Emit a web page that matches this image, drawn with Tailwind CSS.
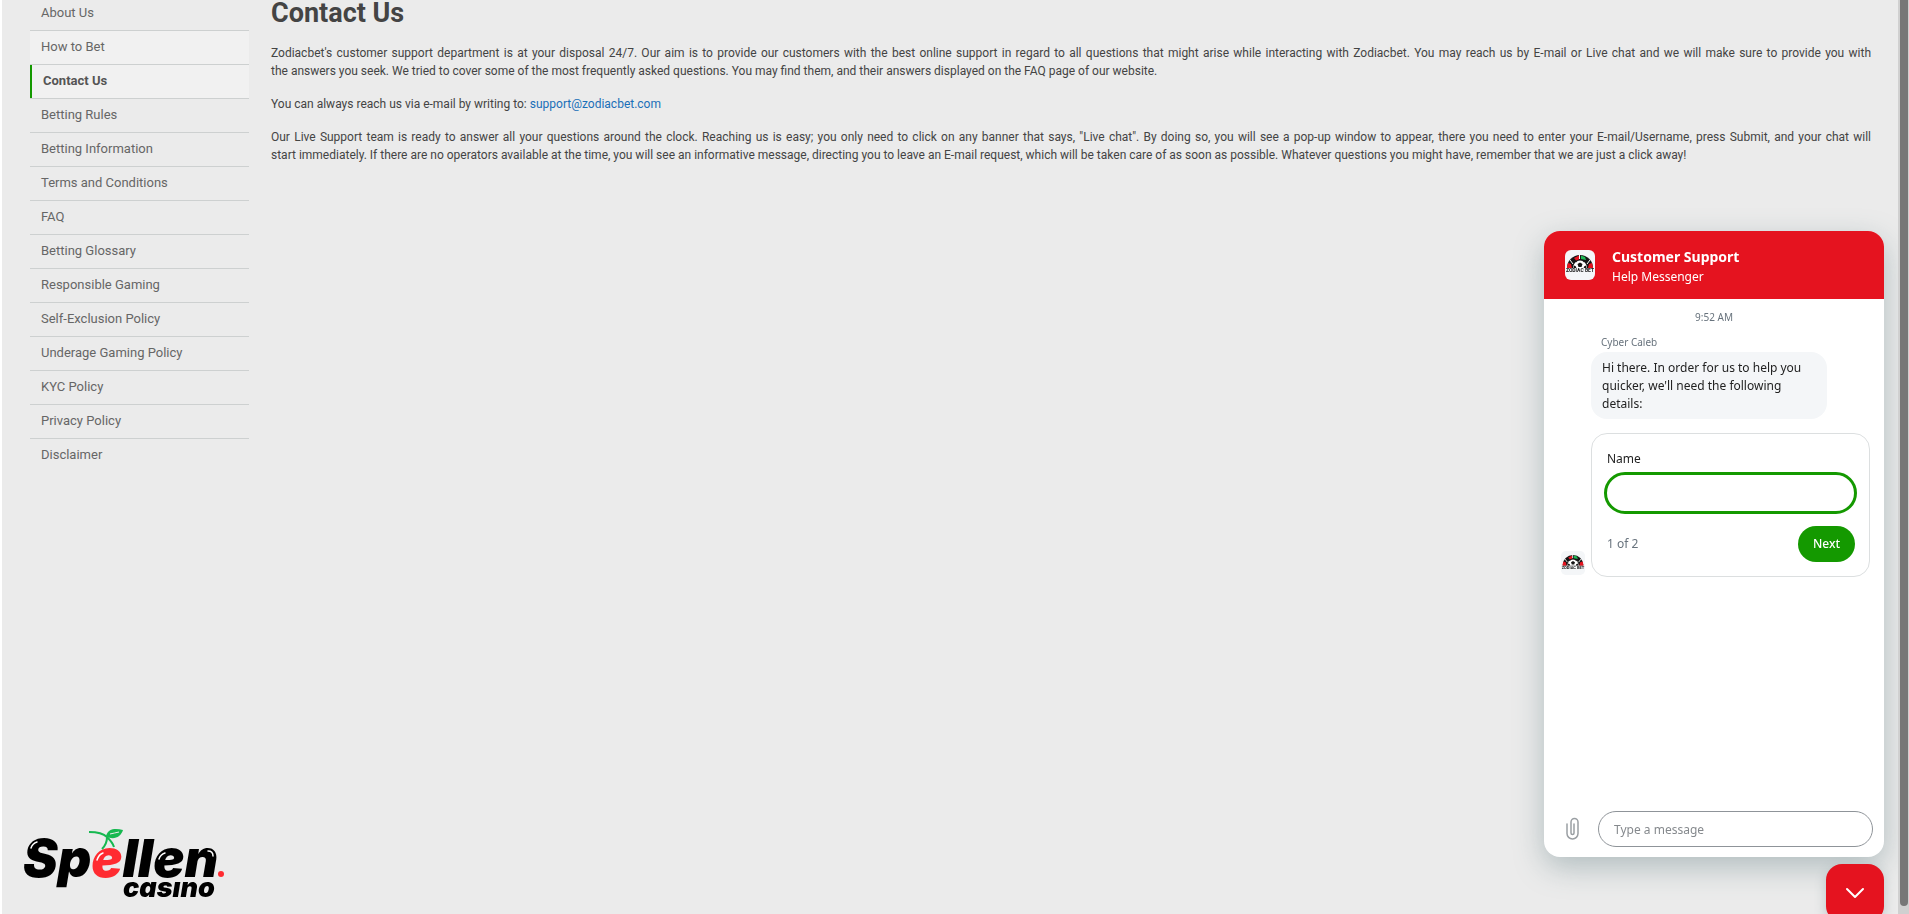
<!DOCTYPE html>
<html lang="en">
<head>
  <meta charset="UTF-8" />
  <meta name="viewport" content="width=device-width, initial-scale=1">
  <title>Contact Us - Zodiacbet</title>
  <script src="https://cdn.jsdelivr.net/npm/@tailwindcss/browser@4"></script>
</head>
<body class="bg-[#ebebeb] font-[Roboto,sans-serif] text-[13px] leading-[18px] text-[#444] min-h-screen overflow-hidden border-l-2 border-white">

  <!-- Shared club badge -->
  <svg class="hidden" xmlns="http://www.w3.org/2000/svg">
    <symbol id="badge" viewBox="0 0 30 30">
      <rect width="30" height="30" rx="6" fill="#f4f6f8" />
      <path d="M2 18a13 13 0 0 1 26 0z" fill="#151515" />
      <path d="M9 8l5-2.500v4l-3 1zM2 17l1-4 3 1 1 4H2zM28 17l-1-4-3 1-1 4h5z" fill="#e5131f" />
      <path d="M16 5.500l4 1.500 1 3-5-1z" fill="#1db954" />
      <path d="M5 10l3 4M25 10l-3 4M14.500 5v4" stroke="#fff" stroke-width="1" />
      <path d="M8 18a7 7.500 0 0 1 14 0z" fill="#fff" />
      <path d="M12.500 14l2.500-1.500 2.500 1.500-1 3h-3zM9 15.500l2 1 .3 1.500H8.500zM21 15.500l-2 1-.3 1.500h2.800zM12.500 11l-1.500 1.500.3-1.500zM17.500 11l1.500 1.500-.3-1.500z" fill="#151515" />
      <text x="15" y="22" text-anchor="middle" font-family="Roboto, sans-serif" font-size="5" font-weight="700" fill="#151515">ZODIAC BET</text>
    </symbol>
  </svg>

  <div class="flex gap-[22px] pl-7 pr-[38px]">
    <!-- Sidebar -->
    <nav class="-mt-[3px] w-[219px] shrink-0">
      <ul class="text-[#666] divide-y divide-[#cdd0d0]">
        <li class="h-[34px]"><a href="#" class="flex h-full items-center pb-[2px] pl-[11px]">About Us</a></li>
        <li class="h-[34px] bg-[#f1f1f1]"><a href="#" class="flex h-full items-center pb-[2px] pl-[11px]">How to Bet</a></li>
        <li class="h-[34px] bg-[#f1f1f1]"><a href="#" class="flex h-full items-center border-l-2 border-[#149900] pb-[2px] pl-[11px] font-bold text-[#555]">Contact Us</a></li>
        <li class="h-[34px]"><a href="#" class="flex h-full items-center pb-[2px] pl-[11px]">Betting Rules</a></li>
        <li class="h-[34px]"><a href="#" class="flex h-full items-center pb-[2px] pl-[11px]">Betting Information</a></li>
        <li class="h-[34px]"><a href="#" class="flex h-full items-center pb-[2px] pl-[11px]">Terms and Conditions</a></li>
        <li class="h-[34px]"><a href="#" class="flex h-full items-center pb-[2px] pl-[11px]">FAQ</a></li>
        <li class="h-[34px]"><a href="#" class="flex h-full items-center pb-[2px] pl-[11px]">Betting Glossary</a></li>
        <li class="h-[34px]"><a href="#" class="flex h-full items-center pb-[2px] pl-[11px]">Responsible Gaming</a></li>
        <li class="h-[34px]"><a href="#" class="flex h-full items-center pb-[2px] pl-[11px]">Self-Exclusion Policy</a></li>
        <li class="h-[34px]"><a href="#" class="flex h-full items-center pb-[2px] pl-[11px]">Underage Gaming Policy</a></li>
        <li class="h-[34px]"><a href="#" class="flex h-full items-center pb-[2px] pl-[11px]">KYC Policy</a></li>
        <li class="h-[34px]"><a href="#" class="flex h-full items-center pb-[2px] pl-[11px]">Privacy Policy</a></li>
        <li class="h-[34px]"><a href="#" class="flex h-full items-center pb-[2px] pl-[11px]">Disclaimer</a></li>
      </ul>
    </nav>

    <!-- Content -->
    <main class="flex-1 text-justify text-[12px] leading-[18px]">
      <h1 class="text-[27px] leading-[26px] font-bold mb-[18px]">Contact Us</h1>
      <p class="mb-[15px]"><span class="block [text-align-last:justify]">Zodiacbet's customer support department is at your disposal 24/7. Our aim is to provide our customers with the best online support in regard to all questions that might arise while interacting with Zodiacbet. You may reach us by E-mail or Live chat and we will make sure to provide you with</span> the answers you seek. We tried to cover some of the most frequently asked questions. You may find them, and their answers displayed on the FAQ page of our website.</p>
      <p class="mb-[15px]">You can always reach us via e-mail by writing to: <a href="mailto:support@zodiacbet.com" class="text-[#1a6fb8]">support@zodiacbet.com</a></p>
      <p><span class="block [text-align-last:justify]">Our Live Support team is ready to answer all your questions around the clock. Reaching us is easy; you only need to click on any banner that says, "Live chat". By doing so, you will see a pop-up window to appear, there you need to enter your E-mail/Username, press Submit, and your chat will</span> start immediately. If there are no operators available at the time, you will see an informative message, directing you to leave an E-mail request, which will be taken care of as soon as possible. Whatever questions you might have, remember that we are just a click away!</p>
    </main>
  </div>

  <!-- Partner logo -->
  <a href="#" aria-label="Spellen casino" class="fixed bottom-2 left-6">
    <svg class="overflow-visible" width="204" height="80" viewBox="0 0 204 80" font-family="Inter, sans-serif" font-weight="900" font-style="italic">
      <text x="-1" y="51" font-size="52">Sp<tspan fill="#ff2b31">e</tspan>llen</text>
      <circle cx="197" cy="48" r="3" fill="#ff2b31" />
      <text x="99" y="71" font-size="27">casıno</text>
      <path d="M65 6c8 0 14 1 18 5 3 3 6 6 7 10M83 11c0 5-2 9-5 12" fill="none" stroke="#16b850" stroke-width="2" />
      <path d="M82 10c2-8 10-8 17-6-2 7-10 11-17 6z" fill="#16b850" />
      <path d="M86 8c3-1 6-1 9-2" fill="none" stroke="#ebebeb" stroke-width="1" />
      <path d="M7 22c1-3 3-5 6-6M73 34c1-3 3-6 6-7M135 33c1-3 3-5 6-6M184 25c3 0 5 2 5 5" fill="none" stroke="#fff" stroke-width="1.500" stroke-linecap="round" />
    </svg>
  </a>

  <!-- Chat widget -->
  <section class="fixed right-[25px] bottom-[57px] flex h-[626px] w-[340px] flex-col overflow-hidden rounded-2xl bg-white font-['Noto_Sans',sans-serif] text-[#222] shadow-[0_10px_30px_rgba(90,120,125,0.4)]">
    <header class="flex h-[68px] shrink-0 items-center gap-[17px] bg-[#e5131f] pl-[21px] text-white">
      <svg class="size-[30px]"><use href="#badge" /></svg>
      <div class="pt-1">
        <h2 class="text-[14px] leading-5 font-bold">Customer Support</h2>
        <p class="text-[12px] leading-5">Help Messenger</p>
      </div>
    </header>
    <div class="flex-1 px-[14px]">
      <p class="mt-2 text-center text-[10px] leading-5 text-[#68737d]">9:52 AM</p>
      <p class="mt-[7px] ml-[43px] text-[10px] leading-4 text-[#68737d]">Cyber Caleb</p>
      <p class="mt-[2px] ml-[33px] w-[236px] rounded-2xl bg-[#f4f6f8] px-[11px] pt-[7px] pb-[6px] text-[12px]">Hi there. In order for us to help you quicker, we'll need the following details:</p>
      <div class="mt-[14px] flex items-end gap-[6px] pl-[3px]">
        <svg class="mb-[2px] size-6 shrink-0"><use href="#badge" /></svg>
        <form class="h-[144px] flex-1 rounded-2xl border border-[#dcdfe0] px-[12px] pt-4">
          <label for="name" class="block pl-[3px] text-[12px]">Name</label>
          <input id="name" type="text" class="mt-1 block h-[42px] w-full rounded-full border-[3px] border-[#149900] px-4 outline-none">
          <div class="mt-3 flex items-center justify-between pl-[3px] pr-[2px]">
            <span class="text-[12px] text-[#68737d]">1 of 2</span>
            <button type="submit" class="h-9 w-[57px] rounded-full bg-[#149900] text-[12px] font-medium text-white">Next</button>
          </div>
        </form>
      </div>
    </div>
    <footer class="flex items-center gap-[17px] pr-[11px] pb-[10px] pl-[20px]">
      <button type="button" aria-label="Attach file">
        <svg class="h-6 w-[17px]" viewBox="0 0 17 24" fill="none" stroke="#9a9fa3" stroke-width="1.500" stroke-linecap="round">
          <path d="M3 7v9.500a5.500 5.500 0 0 0 11 0V5a3.500 3.500 0 0 0-7 0v11a1.500 1.500 0 0 0 3 0V7" />
        </svg>
      </button>
      <input type="text" aria-label="Type a message" placeholder="Type a message" class="h-9 min-w-0 flex-1 rounded-full border border-[#8f9499] px-[15px] text-[12px] placeholder:text-[#85898d]">
    </footer>
  </section>

  <button type="button" aria-label="Close chat" class="fixed right-[25px] -bottom-2 flex size-[58px] items-center justify-center rounded-2xl bg-[#e5131f] shadow-[0_4px_12px_rgba(90,120,125,0.3)]">
    <svg class="h-3 w-5" viewBox="0 0 20 12" fill="none" stroke="#fff" stroke-width="2" stroke-linecap="round" stroke-linejoin="round"><path d="M2 2l8 8 8-8" /></svg>
  </button>

  <!-- Scrollbar -->
  <div class="fixed inset-y-0 right-0 w-[11px] bg-[#d0d0d0] pr-px pb-2 pl-[2px]">
    <div class="h-full rounded-b-full bg-[#777]"></div>
  </div>
</body>
</html>
